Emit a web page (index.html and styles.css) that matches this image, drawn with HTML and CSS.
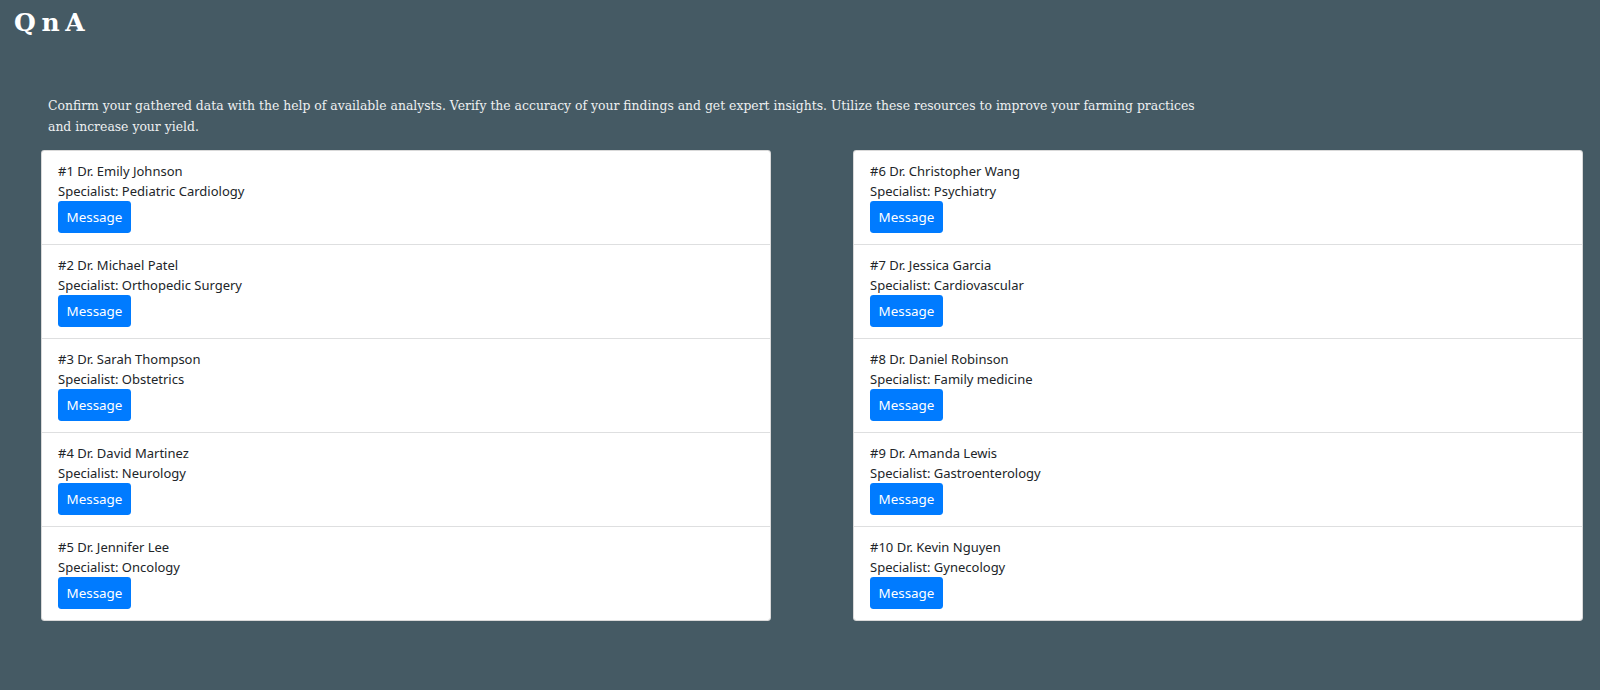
FILE: index.html
```html
<!DOCTYPE html>
<html lang="en">
<head>
<meta charset="utf-8">
<title>QnA</title>
<link rel="stylesheet" href="styles.css">
</head>
<body>
<header class="topbar">
  <h1 class="brand">Q n A</h1>
</header>
<main class="content">
  <p class="intro">Confirm your gathered data with the help of available analysts. Verify the accuracy of your findings and get expert insights. Utilize these resources to improve your farming practices and increase your yield.</p>
  <div class="columns">
    <ul class="card">
      <li class="item"><div class="name">#1 Dr. Emily Johnson</div><div class="spec">Specialist: Pediatric Cardiology</div><button class="btn">Message</button></li>
      <li class="item"><div class="name">#2 Dr. Michael Patel</div><div class="spec">Specialist: Orthopedic Surgery</div><button class="btn">Message</button></li>
      <li class="item"><div class="name">#3 Dr. Sarah Thompson</div><div class="spec">Specialist: Obstetrics</div><button class="btn">Message</button></li>
      <li class="item"><div class="name">#4 Dr. David Martinez</div><div class="spec">Specialist: Neurology</div><button class="btn">Message</button></li>
      <li class="item"><div class="name">#5 Dr. Jennifer Lee</div><div class="spec">Specialist: Oncology</div><button class="btn">Message</button></li>
    </ul>
    <ul class="card">
      <li class="item"><div class="name">#6 Dr. Christopher Wang</div><div class="spec">Specialist: Psychiatry</div><button class="btn">Message</button></li>
      <li class="item"><div class="name">#7 Dr. Jessica Garcia</div><div class="spec">Specialist: Cardiovascular</div><button class="btn">Message</button></li>
      <li class="item"><div class="name">#8 Dr. Daniel Robinson</div><div class="spec">Specialist: Family medicine</div><button class="btn">Message</button></li>
      <li class="item"><div class="name">#9 Dr. Amanda Lewis</div><div class="spec">Specialist: Gastroenterology</div><button class="btn">Message</button></li>
      <li class="item"><div class="name">#10 Dr. Kevin Nguyen</div><div class="spec">Specialist: Gynecology</div><button class="btn">Message</button></li>
    </ul>
  </div>
</main>
</body>
</html>
```
FILE: styles.css
```css
html, body {
  margin: 0;
  padding: 0;
}
body {
  background: #455a64;
  height: 690px;
  overflow: hidden;
  font-family: "Noto Sans", "Open Sans", sans-serif;
}
.topbar {
  padding: 6px 14px 0;
  height: 96px;
  box-sizing: border-box;
}
.brand {
  margin: 0;
  font-family: "DejaVu Serif", serif;
  font-weight: bold;
  font-size: 25px;
  line-height: 34px;
  color: #ffffff;
  word-spacing: -3px;
}
.content {
  padding: 0 17px 0 41px;
}
.intro {
  margin: 0 0 13px 7px;
  width: 1155px;
  font-family: "DejaVu Serif", serif;
  font-size: 12.4px;
  line-height: 20.5px;
  color: #eef0f1;
}
.columns {
  display: grid;
  grid-template-columns: 1fr 1fr;
  column-gap: 82px;
  align-items: start;
}
.card {
  list-style: none;
  margin: 0;
  padding: 0;
  background: #ffffff;
  border: 1px solid rgba(0, 0, 0, 0.15);
  border-radius: 3.4px;
}
.item {
  padding: 10px 17px 11px 16px;
  border-top: 1px solid #dedfe0;
  font-size: 13px;
  line-height: 20px;
  color: #212529;
}
.item:first-child {
  border-top: none;
}
.btn {
  display: block;
  margin: 0;
  width: 73px;
  height: 32px;
  padding: 0;
  border: none;
  border-radius: 3.4px;
  background: #007bff;
  color: #ffffff;
  font-family: "Noto Sans", "Open Sans", sans-serif;
  font-size: 13.4px;
  line-height: 32px;
  text-align: center;
}
```
